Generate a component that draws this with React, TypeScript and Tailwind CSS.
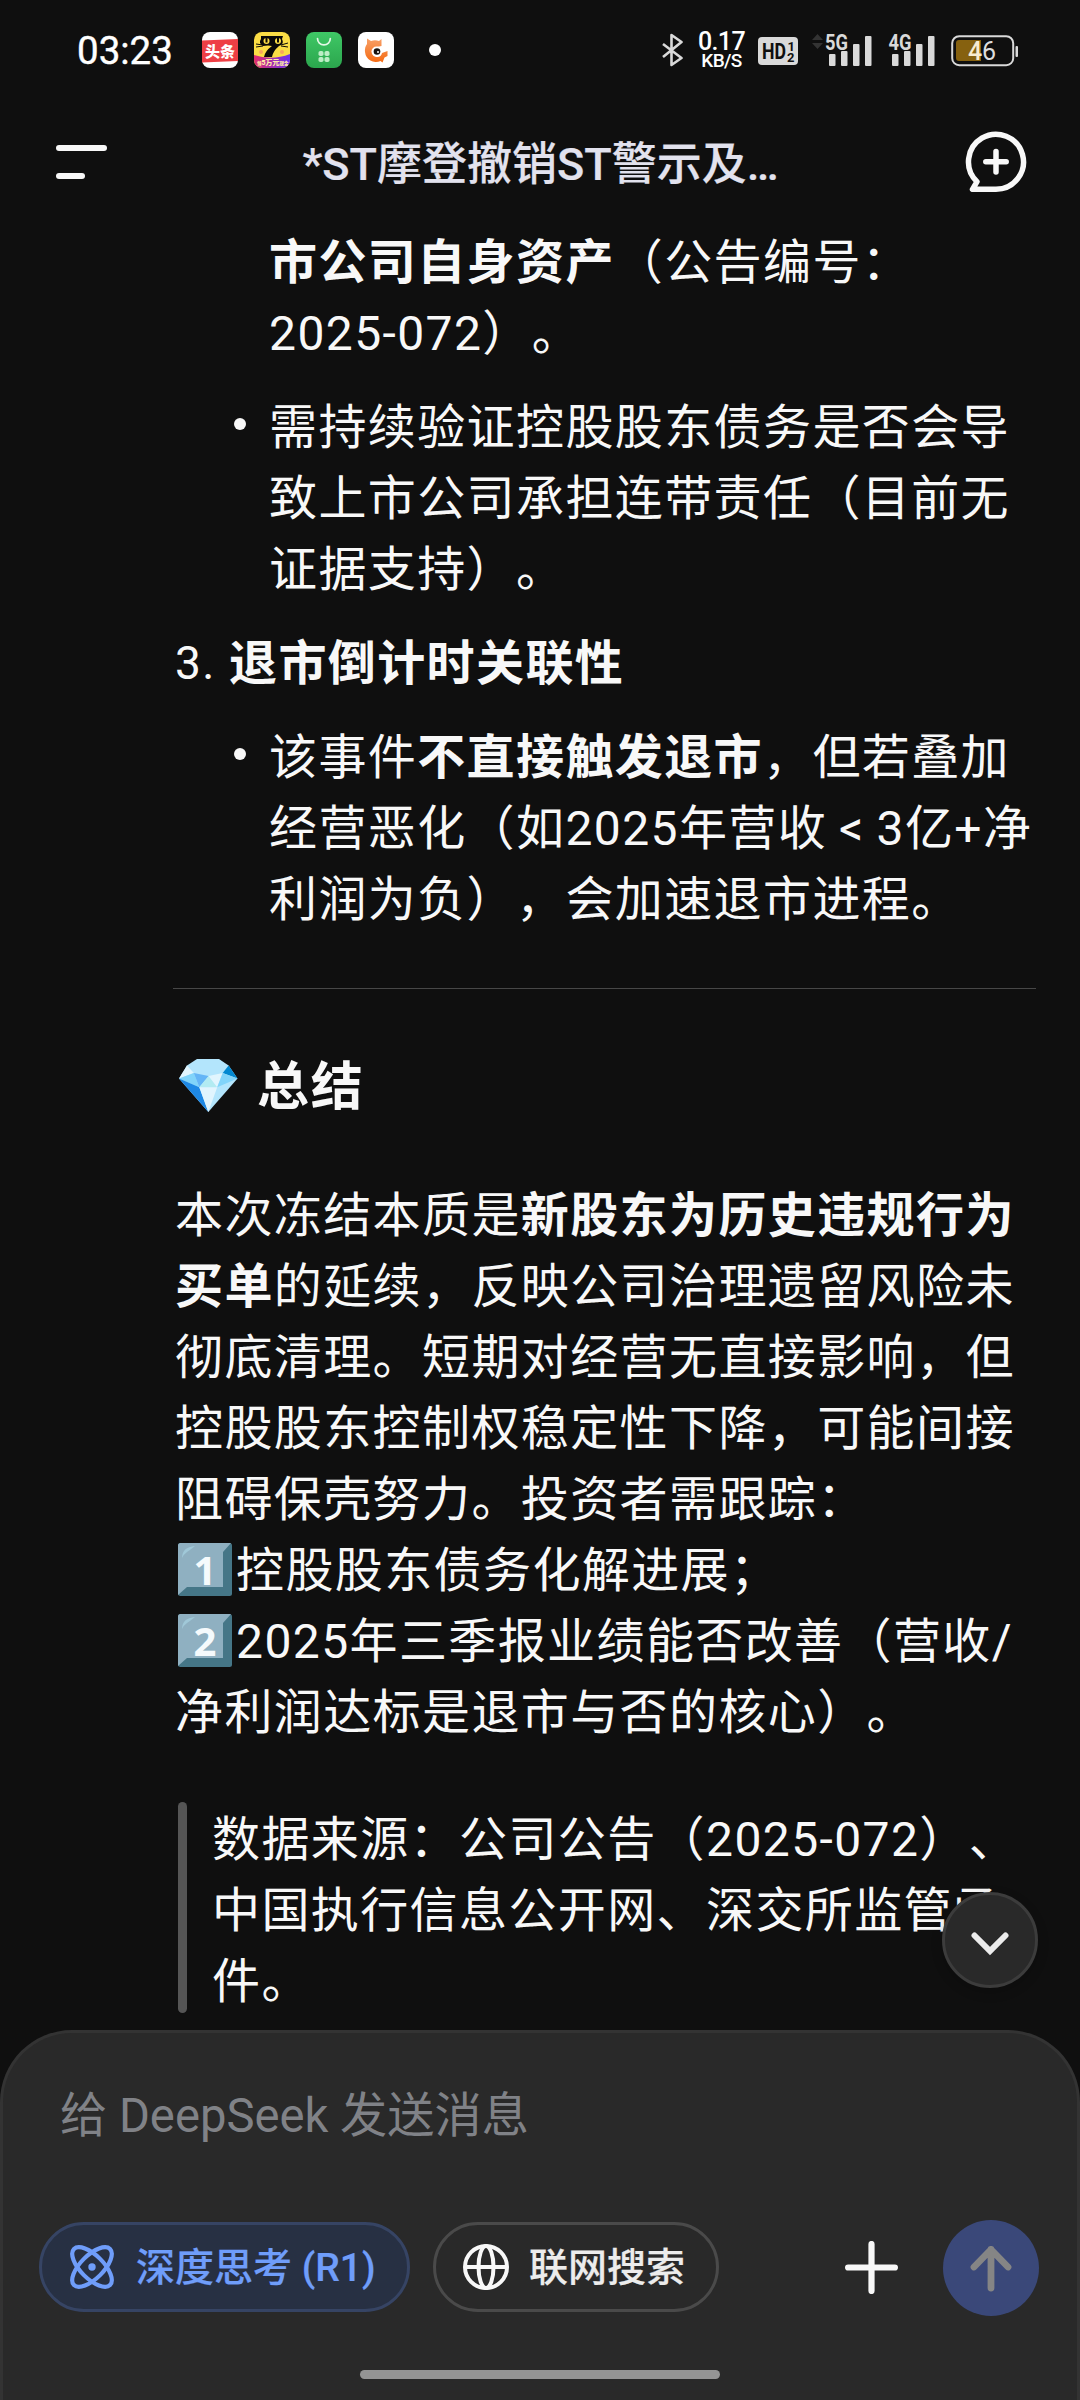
/**
 * Chat screen - assistant answer with message composer
 */

import type { ReactNode } from 'react';

const FONT = "font-['Roboto','Noto_Sans_CJK_SC',sans-serif]";

function StatusBar() {
  return (
    <div className="flex h-[100px] shrink-0 items-center pl-[77px]">
      <span className="w-[125px] pt-0.5 text-[38.5px] leading-none text-white [-webkit-text-stroke:0.4px]">03:23</span>

      {/* Notification icons */}
      <div className="flex gap-4">
        <svg width="36" height="36" viewBox="0 0 36 36">
          <rect width="36" height="36" rx="8" fill="#fff" />
          <path d="M0 8.5L36 7v22L0 30.500z" fill="#ee3f45" />
          <text x="3" y="24.500" fontSize="15" fontWeight="900" fill="#fff">头条</text>
        </svg>
        <svg width="36" height="36" viewBox="0 0 36 36">
          <defs>
            <linearGradient id="cat" x1="0" x2="1">
              <stop offset="0" stopColor="#e22c6c" />
              <stop offset="1" stopColor="#6a31f0" />
            </linearGradient>
            <clipPath id="catClip"><rect width="36" height="36" rx="8" /></clipPath>
          </defs>
          <g clipPath="url(#catClip)">
            <rect width="36" height="36" fill="#fbdd45" />
            <path d="M0 23Q18 29 36 22V36H0z" fill="url(#cat)" />
            <path d="M7 4h22l-1 3q2 4-1 6l-2 1q-6 5-7 11h-8q1-6 8-11l-4-.5-5 .5q-5-3-2-7z" fill="#0b0a08" />
            <path d="M2 12l7 1M2 15l7-1M27 13l7-2M27 14l7 1" stroke="#0b0a08" strokeWidth="1" />
            <circle cx="12.500" cy="9" r="3" fill="#fbdd45" />
            <circle cx="24" cy="9" r="3" fill="#fbdd45" />
            <path d="M12.500 5.500v5M24 5.500v5" stroke="#0b0a08" strokeWidth="2" />
            <circle cx="7" cy="20" r="2" fill="#f8a65c" />
            <circle cx="28" cy="20" r="2" fill="#f8a65c" />
            <text x="3" y="33" fontSize="4.500" fontWeight="900" fill="#ffe9a8">领<tspan fontSize="7">5万元</tspan>现金</text>
          </g>
        </svg>
        <svg width="36" height="36" viewBox="0 0 36 36">
          <defs>
            <linearGradient id="shop" x1="0" x2="0" y1="0" y2="1">
              <stop offset="0" stopColor="#3fc866" />
              <stop offset="1" stopColor="#2ba64d" />
            </linearGradient>
          </defs>
          <rect width="36" height="36" rx="8" fill="url(#shop)" />
          <path d="M11.500 6.500a6.400 6.400 0 0 0 12.800 0" fill="none" stroke="#e3f8e6" strokeWidth="1.700" strokeLinecap="round" />
          <g fill="#bdedc6">
            <rect x="12.500" y="19" width="5" height="5" rx="1.800" />
            <rect x="18.500" y="19" width="5" height="5" rx="1.800" />
            <rect x="12.500" y="25" width="5" height="5" rx="1.800" />
            <rect x="18.500" y="25" width="5" height="5" rx="1.800" />
          </g>
        </svg>
        <svg width="36" height="36" viewBox="0 0 36 36">
          <defs>
            <linearGradient id="fox" x1="0" x2="0" y1="0" y2="1">
              <stop offset="0" stopColor="#f7a068" />
              <stop offset="1" stopColor="#f56a12" />
            </linearGradient>
          </defs>
          <rect width="36" height="36" rx="8" fill="#fff" />
          <path d="M9 12V6.500l4 2.500q4-1.500 8 0l2.500-2v7l-5 1a5 5 0 1 0 5.500 6l5.500-2v5l-3 1.500-2 5-2-1.500A11 11 0 0 1 7 20q-.5-5 2-8z" fill="url(#fox)" />
          <circle cx="18.500" cy="19.500" r="5" fill="#fff" />
          <circle cx="19" cy="19.500" r="3.300" fill="#17120f" />
          <circle cx="20" cy="20" r="1" fill="#fff" />
        </svg>
      </div>
      <div className="ml-[35px] h-3 w-3 rounded-full bg-white" />

      {/* System indicators */}
      <svg className="ml-[221px]" width="21" height="36" viewBox="0 0 21 36" fill="none" stroke="#d9d9d9" strokeWidth="2.600" strokeLinejoin="round">
        <path d="M1 12L19.500 26 9.500 33V3L19.500 10 1 25" />
      </svg>
      <div className="ml-[17px] flex w-[43px] flex-col items-center text-white">
        <span className="text-[25px] leading-[20px] font-medium tracking-[-0.6px]">0.17</span>
        <span className="text-[19px] leading-[17px] font-medium tracking-[-0.6px] whitespace-nowrap">KB/S</span>
      </div>
      <svg className="mt-0.5 ml-[15px]" width="40" height="28" viewBox="0 0 40 28">
        <rect width="40" height="28" rx="4" fill="#d9d9d9" />
        <g fill="#0f0f0f" fontWeight="700">
          <text x="4" y="22" fontSize="22" textLength="24" lengthAdjust="spacingAndGlyphs">HD</text>
          <text x="29.500" y="13.500" fontSize="13">1</text>
          <text x="29" y="25" fontSize="13">2</text>
        </g>
      </svg>
      <svg className="ml-[14px]" width="61" height="50" viewBox="0 -8 61 50" fill="#d9d9d9">
        <path d="M0 7l5.500-6 5.500 6zM0 10h11l-5.500 6z" fill="#333" />
        <text x="13" y="16.500" fontSize="22.500" fontWeight="700" textLength="23" lengthAdjust="spacingAndGlyphs">5G</text>
        <rect x="17" y="21" width="6.500" height="12" rx="1" />
        <rect x="29" y="18" width="6.500" height="15" rx="1" />
        <rect x="41" y="11" width="6.500" height="22" rx="1" />
        <rect x="53" y="3" width="6.500" height="30" rx="1" />
      </svg>
      <svg className="ml-[15px]" width="48" height="50" viewBox="0 -8 48 50" fill="#d9d9d9">
        <text x="0.500" y="16.500" fontSize="22.500" fontWeight="700" textLength="23" lengthAdjust="spacingAndGlyphs">4G</text>
        <rect x="4" y="21" width="6.500" height="12" rx="1" />
        <rect x="16" y="18" width="6.500" height="15" rx="1" />
        <rect x="28" y="11" width="6.500" height="22" rx="1" />
        <rect x="40" y="3" width="6.500" height="30" rx="1" />
      </svg>
      <svg className="mt-px ml-[15px]" width="68" height="32" viewBox="0 0 68 32">
        <rect x="1.200" y="1.200" width="61" height="29" rx="7" fill="none" stroke="#d9d9d9" strokeWidth="2" />
        <path d="M8 5h22v21H8a3 3 0 0 1-3-3V8a3 3 0 0 1 3-3z" fill="#86610f" />
        <rect x="64.500" y="11" width="2.500" height="11" rx="1" fill="#d9d9d9" />
        <text x="17" y="24.500" fontSize="25" textLength="28" fill="#dedede"><tspan fill="#f8ecd0" fontWeight="500">4</tspan>6</text>
      </svg>
    </div>
  );
}

function Header() {
  return (
    <div className="flex h-[124px] shrink-0 items-center justify-between pr-[53px] pl-14">
      <div className="flex w-[60px] flex-col gap-[22px]">
        <div className="h-1.5 w-[51px] rounded-full bg-[#f8f8f8]" />
        <div className="h-1.5 w-[29px] rounded-full bg-[#f8f8f8]" />
      </div>
      <h1 className="pt-[5px] text-[45px] font-medium whitespace-nowrap text-[#e2e2ee] [-webkit-text-stroke:0.2px]">*ST摩登撤销ST警示及…</h1>
      <svg width="62" height="62" viewBox="0 0 62 62" fill="none" stroke="#f8f8f8" strokeWidth="5.500" strokeLinecap="round" strokeLinejoin="round">
        <path d="M31 58.300A27.500 27.500 0 1 0 12 50.700L7.500 58.300z" />
        <path d="M31 20.500v20.500M20.800 30.800h20.400" />
      </svg>
    </div>
  );
}

// Full-width less-than cell
function LessThan() {
  return <span className="inline-block w-[49.4px] text-center">&lt;</span>;
}

function Line({ children }: { children: ReactNode }) {
  return <div className="h-[71px] whitespace-nowrap">{children}</div>;
}

function Bullet({ children }: { children: ReactNode }) {
  return (
    <li className="flex pl-[59px]">
      <span className="mt-[26px] mr-[23px] h-3 w-3 shrink-0 rounded-full bg-[#f8f8f8]" />
      <div>{children}</div>
    </li>
  );
}

function Keycap({ digit }: { digit: string }) {
  return (
    <svg className="mr-1 ml-[3px] inline-block align-[-9px]" width="54" height="53" viewBox="0 0 54 53">
      <rect width="54" height="53" rx="2.500" fill="#457687" />
      <path d="M2.500 0H53L45 9v35H9l-9 8V2.500A2.500 2.500 0 0 1 2.500 0z" fill="#8fb0c1" />
      <path d="M4 15Q4 4 17 3q-5 4-8 6t-5 6z" fill="#a0c8d8" />
      <text x="27" y="41.500" textAnchor="middle" fontFamily="Noto Sans" fontSize="40" fontWeight="700" letterSpacing="0" fill="#f5fafc">{digit}</text>
    </svg>
  );
}

function Gem() {
  return (
    <svg width="59" height="54" viewBox="0 0 59 54">
      <path d="M18 0h22l9.600 6.500L58.500 19.500 29.300 53 0 19.500 8 6.500z" fill="#b3e5fc" />
      <path d="M8 6.500L14.800 14 0 19.500z" fill="#e1f5fe" />
      <path d="M14.800 14L0 19.500l20.300 8.800z" fill="#81d4fa" />
      <path d="M0 19.500l20.300 8.800 9 24.700z" fill="#1e88e5" />
      <path d="M14.800 14l14.800 3-9.300 11.300z" fill="#64b5f6" />
      <path d="M29.600 17l8.600 11.300H20.300z" fill="#b2ebf2" />
      <path d="M29.600 17l14.100-3-5.500 14.300zM20.300 28.300h17.900L29.300 53z" fill="#e1f5fe" />
      <path d="M49.600 6.500l8.900 13L43.700 14z" fill="#0288d1" />
      <path d="M43.700 14l14.800 5.500-20.300 8.800z" fill="#81d4fa" />
    </svg>
  );
}

function Answer() {
  return (
    <div className="relative flex-1 overflow-hidden pt-[3px] pl-[175px] text-[48px] leading-[71px] tracking-[1.4px] text-[#f8f8f8]">
      <ul className="flex flex-col gap-[23px]">
        <li className="pl-[94px]">
          <Line><b className="font-bold">市公司自身资产</b>（公告编号：</Line>
          <Line>2025-072）。</Line>
        </li>
        <Bullet>
          <Line>需持续验证控股股东债务是否会导</Line>
          <Line>致上市公司承担连带责任（目前无</Line>
          <Line>证据支持）。</Line>
        </Bullet>
        <li className="flex">
          <span className="w-[54px] text-[46px]">3.</span>
          <b className="font-bold">退市倒计时关联性</b>
        </li>
        <Bullet>
          <Line>该事件<b className="font-bold">不直接触发退市</b>，但若叠加</Line>
          <Line>经营恶化（如2025年营收<LessThan />3亿+净</Line>
          <Line>利润为负），会加速退市进程。</Line>
        </Bullet>
      </ul>

      <hr className="mt-[53px] -ml-0.5 w-[863px] border-t border-[#474747]" />

      <h2 className="mt-[61px] flex h-[71px] items-center gap-[19px] pl-1 text-[52px] font-bold tracking-[1.8px]">
        <Gem />
        <span className="pt-[3px]">总结</span>
      </h2>

      <div className="mt-[59px]">
        <Line>本次冻结本质是<b className="font-bold">新股东为历史违规行为</b></Line>
        <Line><b className="font-bold">买单</b>的延续，反映公司治理遗留风险未</Line>
        <Line>彻底清理。短期对经营无直接影响，但</Line>
        <Line>控股股东控制权稳定性下降，可能间接</Line>
        <Line>阻碍保壳努力。投资者需跟踪：</Line>
        <Line><Keycap digit="1" />控股股东债务化解进展；</Line>
        <Line><Keycap digit="2" />2025年三季报业绩能否改善（营收/</Line>
        <Line>净利润达标是退市与否的核心）。</Line>
      </div>

      <blockquote className="mt-[54px] flex gap-[25px] pl-[3px]">
        <div className="h-[211px] w-[9px] rounded-full bg-[#555]" />
        <div className="pt-0.5">
          <Line>数据来源：公司公告（2025-072）、</Line>
          <Line>中国执行信息公开网、深交所监管函</Line>
          <Line>件。</Line>
        </div>
      </blockquote>

      {/* Scroll to bottom */}
      <button className="absolute right-[42px] bottom-[42px] flex h-24 w-24 items-center justify-center rounded-full border-3 border-[#3c3c3c] bg-[#292929] shadow-[0_4px_12px_rgba(0,0,0,0.2)]">
        <svg className="mt-2" width="38" height="24" viewBox="0 0 38 24" fill="none" stroke="#ececec" strokeWidth="6" strokeLinecap="round">
          <path d="M3.500 3.500L19 19 34.500 3.500" />
        </svg>
      </button>
    </div>
  );
}

function Composer() {
  return (
    <div className="flex h-[370px] shrink-0 flex-col rounded-t-[72px] border-x-3 border-t-3 border-[#333] bg-[#292929]">
      <div className="mt-[48px] h-[71px] pl-[57px] text-[47.2px] leading-[71px] text-[#808287]">给 DeepSeek 发送消息</div>

      <div className="mt-[68px] flex h-24 items-center pr-[38px] pl-9">
        <button className="-mt-0.5 flex h-[90px] w-[371px] items-center rounded-full border-3 border-[#364464] bg-[#273043] pl-[28px] text-[39px] font-medium text-[#6f9dfa]">
          <svg className="mr-[22px]" width="44" height="44" viewBox="0 0 44 44" fill="none" stroke="#6f9dfa" strokeWidth="4.200">
            <ellipse cx="22" cy="22" rx="11.500" ry="25.500" transform="rotate(45 22 22)" />
            <ellipse cx="22" cy="22" rx="11.500" ry="25.500" transform="rotate(-45 22 22)" />
            <circle cx="22" cy="22" r="3.700" fill="#6f9dfa" stroke="none" />
          </svg>
          <span className="pt-[3px] whitespace-nowrap [-webkit-text-stroke:0.2px]">深度思考 (R1)</span>
        </button>
        <button className="-mt-0.5 ml-[23px] flex h-[90px] w-[286px] items-center rounded-full border-3 border-[#4a4a4a] pl-[27px] text-[39px] font-medium text-[#ececec]">
          <svg className="mr-[20px]" width="46" height="46" viewBox="0 0 46 46" fill="none" stroke="#f8f8f8" strokeWidth="4">
            <circle cx="23" cy="23" r="21" />
            <ellipse cx="23" cy="23" rx="7.500" ry="21" />
            <path d="M2 23h42" />
          </svg>
          <span className="pt-[3px] whitespace-nowrap [-webkit-text-stroke:0.2px]">联网搜索</span>
        </button>
        <svg className="-mt-0.5 ml-auto" width="53" height="53" viewBox="0 0 53 53" stroke="#f8f8f8" strokeWidth="6.200" strokeLinecap="round">
          <path d="M26.500 3v47M3.100 26.500h46.800" />
        </svg>
        <button className="ml-[45px] flex h-24 w-24 items-center justify-center rounded-full bg-[#3a4879]">
          <svg width="42" height="47" viewBox="0 0 42 47" fill="none" stroke="#858585" strokeWidth="6.800" strokeLinecap="round" strokeLinejoin="round">
            <path d="M21 43V4.500M4 22L21 4.500 38 22" />
          </svg>
        </button>
      </div>

      {/* Home indicator */}
      <div className="mx-auto mt-[54px] h-[9px] w-[360px] rounded-full bg-[#949494]" />
    </div>
  );
}

export default function App() {
  return (
    <div lang="zh-CN" className={`flex h-[2400px] w-[1080px] flex-col overflow-hidden bg-[#0f0f0f] [text-spacing-trim:space-all] ${FONT}`}>
      <StatusBar />
      <Header />
      <Answer />
      <Composer />
    </div>
  );
}
